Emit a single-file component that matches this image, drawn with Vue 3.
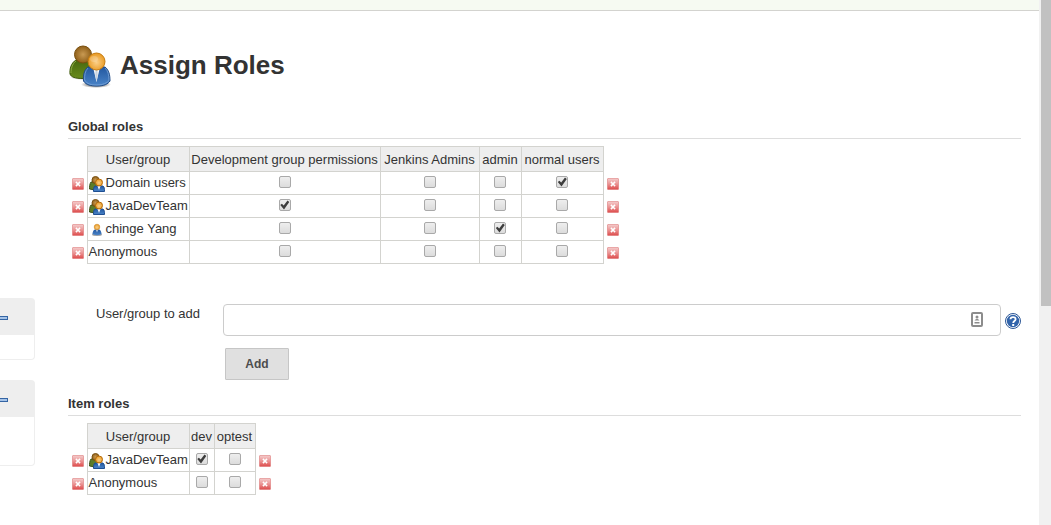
<script setup>
import { ref } from 'vue'

const sections = ref([
  {
    title: 'Global roles',
    widths: [102, 191, 99, 42, 82],
    roles: ['Development group permissions', 'Jenkins Admins', 'admin', 'normal users'],
    rows: [
      { name: 'Domain users', icon: 'group', checks: [false, false, false, true] },
      { name: 'JavaDevTeam', icon: 'group', checks: [true, false, false, false] },
      { name: 'chinge Yang', icon: 'person', checks: [false, false, true, false] },
      { name: 'Anonymous', icon: '', checks: [false, false, false, false] }
    ],
    canAdd: true
  },
  {
    title: 'Item roles',
    widths: [102, 25, 41],
    roles: ['dev', 'optest'],
    rows: [
      { name: 'JavaDevTeam', icon: 'group', checks: [true, false] },
      { name: 'Anonymous', icon: '', checks: [false, false] }
    ],
    canAdd: false
  }
])

const newUser = ref('')

function removeRow(section, index) {
  section.rows.splice(index, 1)
}

function addRow(section) {
  const name = newUser.value.trim()
  if (!name) return
  section.rows.push({ name, icon: 'person', checks: section.roles.map(() => false) })
  newUser.value = ''
}
</script>

<template>
  <svg class="defs" aria-hidden="true">
    <defs>
      <radialGradient id="brown" cx="0.5" cy="0.5" r="0.55">
        <stop offset="0" stop-color="#c99a52" /><stop offset="1" stop-color="#8a5a14" />
      </radialGradient>
      <radialGradient id="orange" cx="0.5" cy="0.55" r="0.55">
        <stop offset="0" stop-color="#fbd08a" /><stop offset="1" stop-color="#e8981f" />
      </radialGradient>
      <linearGradient id="green" x1="0" y1="0" x2="0" y2="1">
        <stop offset="0" stop-color="#47680f" /><stop offset="1" stop-color="#688b1c" />
      </linearGradient>
      <linearGradient id="blue" x1="0" y1="0" x2="0" y2="1">
        <stop offset="0" stop-color="#2358a0" /><stop offset="1" stop-color="#4a84c8" />
      </linearGradient>
      <linearGradient id="red" x1="0" y1="0" x2="0" y2="1">
        <stop offset="0" stop-color="#f4cccc" /><stop offset="0.5" stop-color="#eb9494" /><stop offset="1" stop-color="#dd4a4a" />
      </linearGradient>
      <radialGradient id="shade">
        <stop offset="0.4" stop-color="#777" /><stop offset="1" stop-color="#777" stop-opacity="0" />
      </radialGradient>
      <symbol id="users-large" viewBox="0 0 48 48">
        <ellipse cx="17" cy="36" rx="13" ry="3" fill="url(#shade)" opacity="0.7" />
        <ellipse cx="30" cy="43.500" rx="15" ry="3.500" fill="url(#shade)" />
        <path d="M10 19C5 22 3.500 28 4 33C5 36 9 37.500 17 37.500C24 37.500 28 35 28 31L25 19Z" fill="url(#green)" stroke="#3f5a0c" />
        <path d="M10 20C6 23 5 28 5 32" fill="none" stroke="#8eac45" />
        <circle cx="17" cy="13.500" r="8.500" fill="url(#brown)" stroke="#7a500f" />
        <path d="M22 26C18 29 17 34 17.500 40C20 44 25 45 31 45C38 45 42 43 44 40C44 34 43 29 39 26Z" fill="url(#blue)" stroke="#204b87" />
        <path d="M22 27C19 30 18.500 34 18.600 39C21 43 25 44 31 44C37 44 41 42 43 39.500C43 34 42 30 39 27" fill="none" stroke="#79a3d7" stroke-width="0.8" />
        <path d="M27 26H34L30.500 41Z" fill="#fff" />
        <path d="M29.500 29H31.500L31.700 34L30.500 41L29.300 34Z" fill="#c7d2df" />
        <circle cx="30.500" cy="20.500" r="8.500" fill="url(#orange)" stroke="#c67c10" />
        <ellipse cx="28" cy="18" rx="4" ry="3" fill="#fff" opacity="0.2" />
      </symbol>
      <symbol id="users-small" viewBox="0 0 16 16">
        <path d="M2 6C0.500 8 0.500 11 0.500 13L6 14L10 10V6Z" fill="#5d7c28" stroke="#3c531b" />
        <circle cx="6.500" cy="4" r="3.500" fill="url(#brown)" stroke="#79500f" />
        <path d="M6 10C4.500 11 4.500 13 4.500 15.500H15.500C15.500 13 15.500 11 14 10Z" fill="url(#blue)" stroke="#1f4f92" />
        <path d="M8.500 10H11.500L10 14Z" fill="#fff" />
        <circle cx="10" cy="6.500" r="3.500" fill="url(#orange)" stroke="#b86d0b" />
      </symbol>
      <symbol id="person" viewBox="0 0 16 16">
        <ellipse cx="8" cy="12.500" rx="5" ry="1.500" fill="#aaa" />
        <path d="M3.500 12C3.500 9.500 5 7.500 6 7.500H10C11 7.500 12.500 9.500 12.500 12C11 13.500 5 13.500 3.500 12Z" fill="url(#blue)" />
        <path d="M7.300 8H8.700L8 10.500Z" fill="#fff" />
        <circle cx="8" cy="5" r="2.800" fill="url(#orange)" stroke="#c98220" stroke-width="0.500" />
      </symbol>
      <symbol id="remove" viewBox="0 0 12 12">
        <rect x="0.500" y="0.500" width="11" height="11" rx="0.500" fill="url(#red)" stroke="#d96a6a" stroke-opacity="0.5" />
        <path d="M4.500 4.500L7.500 7.500M7.500 4.500L4.500 7.500" stroke="#fff" stroke-width="1.600" stroke-linecap="square" />
      </symbol>
    </defs>
  </svg>

  <div class="page">
    <div class="content">
      <header class="topbar"></header>
      <div class="columns">
        <aside class="side">
          <section class="pane">
            <div class="pane-head"><button class="collapse" type="button" aria-label="Collapse"></button></div>
            <div class="pane-body"></div>
          </section>
          <section class="pane">
            <div class="pane-head"><button class="collapse" type="button" aria-label="Collapse"></button></div>
            <div class="pane-body tall"></div>
          </section>
        </aside>

        <main class="main">
          <h1>
            <svg class="title-icon" aria-hidden="true"><use href="#users-large" /></svg>
            <span>Assign Roles</span>
          </h1>

          <section v-for="section in sections" :key="section.title" class="section">
            <h2>{{ section.title }}</h2>
            <table>
              <colgroup>
                <col class="edge">
                <col v-for="(w, i) in section.widths" :key="i" :style="{ width: w + 'px' }">
                <col class="edge">
              </colgroup>
              <thead>
                <tr>
                  <td class="bare"></td>
                  <th scope="col">User/group</th>
                  <th v-for="role in section.roles" :key="role" scope="col">{{ role }}</th>
                  <td class="bare"></td>
                </tr>
              </thead>
              <tbody>
                <tr v-for="(row, r) in section.rows" :key="row.name">
                  <td class="bare">
                    <button class="remove left" type="button" :aria-label="'Remove ' + row.name" @click="removeRow(section, r)">
                      <svg><use href="#remove" /></svg>
                    </button>
                  </td>
                  <td>
                    <div class="name">
                      <svg v-if="row.icon" class="name-icon" aria-hidden="true">
                        <use :href="row.icon === 'group' ? '#users-small' : '#person'" />
                      </svg>
                      <span>{{ row.name }}</span>
                    </div>
                  </td>
                  <td v-for="(role, i) in section.roles" :key="role">
                    <input v-model="row.checks[i]" class="check" type="checkbox" :aria-label="row.name + ' ' + role">
                  </td>
                  <td class="bare">
                    <button class="remove right" type="button" :aria-label="'Remove ' + row.name" @click="removeRow(section, r)">
                      <svg><use href="#remove" /></svg>
                    </button>
                  </td>
                </tr>
              </tbody>
            </table>

            <form v-if="section.canAdd" class="add-form" @submit.prevent="addRow(section)">
              <label for="new-user">User/group to add</label>
              <div class="field">
                <input id="new-user" v-model="newUser" type="text">
                <svg class="card-icon" viewBox="0 0 12 16" aria-hidden="true">
                  <rect x="1" y="1" width="10" height="13" rx="1" fill="#fff" stroke="#8c8c8c" stroke-width="2" />
                  <circle cx="6" cy="5" r="1.500" fill="#8c8c8c" />
                  <path d="M3.500 8.500Q6 5 8.500 8.500ZM3.500 10H8.500V11.500H3.500Z" fill="#8c8c8c" />
                </svg>
              </div>
              <button class="help" type="button" aria-label="Help">
                <svg viewBox="0 0 16 16">
                  <circle cx="8" cy="8" r="7.500" fill="#fff" stroke="#2d5796" />
                  <circle cx="8" cy="8" r="6.200" fill="#3163aa" />
                  <path d="M5.500 6.300C5.500 3.300 10.600 3.300 10.600 6.200C10.600 8 8.200 8 8.200 10" fill="none" stroke="#fff" stroke-width="1.800" />
                  <rect x="7.200" y="11" width="2" height="2" fill="#fff" />
                </svg>
              </button>
              <button class="add" type="submit">Add</button>
            </form>
          </section>
        </main>
      </div>
    </div>
    <div class="scrollbar" aria-hidden="true"><div class="thumb"></div></div>
  </div>
</template>

<style>
body {
  background: #fff;
}
</style>

<style scoped>
.defs {
  position: absolute;
  width: 0;
  height: 0;
}
.page {
  display: flex;
  min-height: 100vh;
  color: #333;
  font: 13px/20px "Liberation Sans", Arial, sans-serif;
}
.content {
  flex: 1;
  min-width: 0;
}
.topbar {
  height: 10px;
  background: #f6faf2;
  border-bottom: 1px solid #d3d3cf;
}
.columns {
  display: flex;
}
.side {
  width: 35px;
  padding-top: 287px;
}
.pane {
  margin-bottom: 20px;
  border: 1px solid #eee;
  border-left: 0;
  border-radius: 0 4px 4px 0;
}
.pane-head {
  display: flex;
  align-items: center;
  box-sizing: border-box;
  height: 36px;
  padding-top: 2px;
  background: #eee;
}
.pane-body {
  height: 24px;
}
.pane-body.tall {
  height: 48px;
}
.collapse {
  width: 8px;
  height: 4px;
  padding: 0;
  border: 1px solid #3465a4;
  border-left: 0;
  background: #a5c3e8;
}
.main {
  flex: 1;
  min-width: 0;
  padding: 30px 18px 30px 33px;
}
h1 {
  display: flex;
  align-items: center;
  gap: 6px;
  margin: 0 0 28px;
  font-size: 26px;
  line-height: 48px;
}
.title-icon {
  width: 48px;
  height: 48px;
  margin-left: -2px;
}
h2 {
  margin: 0 0 7px;
  padding-bottom: 1px;
  border-bottom: 1px solid #ddd;
  font-size: 13px;
  line-height: 20px;
}
table {
  width: 0;
  table-layout: fixed;
  border-collapse: collapse;
}
.edge {
  width: 19px;
}
th,
td {
  box-sizing: border-box;
  height: 23px;
  padding: 0 1px;
  border: 1px solid #d3d3cf;
  text-align: center;
  vertical-align: middle;
  white-space: nowrap;
}
th {
  height: 25px;
  padding-top: 2px;
  background: #eee;
  font-weight: 400;
}
.bare {
  padding: 0;
  border: 0;
}
.name {
  display: flex;
  align-items: center;
  gap: 1px;
  line-height: 20px;
}
.name-icon {
  width: 16px;
  height: 16px;
  margin-top: 2px;
}
.remove {
  display: block;
  width: 12px;
  height: 12px;
  margin: 2px 0 0 4px;
  padding: 0;
  border: 0;
  background: none;
}
.remove.right {
  margin-left: 3px;
}
svg {
  display: block;
  flex: none;
}
.remove svg {
  width: 12px;
  height: 12px;
}
.check {
  display: block;
  appearance: none;
  box-sizing: border-box;
  width: 12px;
  height: 12px;
  margin: 0 auto 2px;
  border: 1px solid #a9a9a9;
  border-radius: 2px;
  background: linear-gradient(#eee, #dcdcdc);
}
.check:checked::before {
  content: "";
  display: block;
  width: 10px;
  height: 10px;
  background: #3d3d3d;
  clip-path: polygon(8% 50%, 24% 38%, 42% 55%, 80% 6%, 98% 20%, 45% 94%);
}
.add-form {
  display: grid;
  grid-template-columns: 155px 1fr 16px;
  align-items: center;
  column-gap: 4px;
  margin: 40px 0 14px;
}
.add-form label {
  align-self: start;
  padding-left: 28px;
}
.field {
  position: relative;
  margin-left: -4px;
}
.field input {
  display: block;
  box-sizing: border-box;
  width: 100%;
  height: 32px;
  padding: 6px 36px 6px 12px;
  border: 1px solid #ccc;
  border-radius: 4px;
  background: #fff;
  font: inherit;
}
.card-icon {
  position: absolute;
  top: 8px;
  right: 18px;
  width: 12px;
  height: 16px;
}
.help {
  width: 16px;
  height: 16px;
  margin-top: 2px;
  padding: 0;
  border: 0;
  background: none;
}
.help svg {
  width: 16px;
  height: 16px;
}
.add {
  grid-column: 2;
  justify-self: start;
  width: 64px;
  height: 32px;
  margin: 12px 0 0 -2px;
  padding: 0;
  border: 1px solid #c6c6c6;
  border-radius: 1px;
  background: #e0e0e0;
  color: #4d4d4d;
  font: bold 12px/16px "Liberation Sans", Arial, sans-serif;
}
.scrollbar {
  width: 12px;
  padding-left: 2px;
  box-sizing: border-box;
  background: #f1f1f1;
}
.thumb {
  height: 306px;
  background: #c1c1c1;
}
</style>
